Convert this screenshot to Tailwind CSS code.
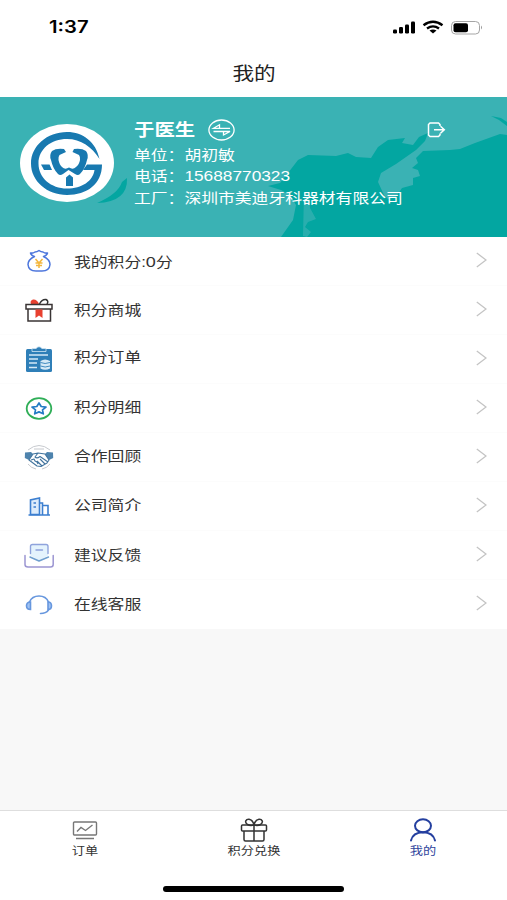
<!DOCTYPE html>
<html lang="zh-CN">
<head>
  <meta charset="UTF-8">
  <meta name="viewport" content="width=device-width, initial-scale=1.0">
  <title>我的</title>
  <script src="https://cdn.jsdelivr.net/npm/@tailwindcss/browser@4"></script>
</head>
<body class="bg-[#f8f8f8] font-['Liberation_Sans','Noto_Sans_CJK_SC',sans-serif]">
<div class="flex flex-col h-[900px] w-[507px] overflow-hidden">

  <!-- status bar -->
  <div class="h-[50px] shrink-0 bg-white flex items-center justify-between pl-[49px] pr-[24px] pt-[5px]">
    <span class="text-[17px] leading-none font-semibold text-black font-[Inter,sans-serif] origin-left scale-x-[1.19]">1:37</span>
    <svg class="w-[91px] h-[16px]" viewBox="0 0 91 16">
      <rect x="1" y="9.5" width="4" height="4" rx="1.2"/>
      <rect x="7" y="7" width="4" height="6.5" rx="1.2"/>
      <rect x="13" y="4.500" width="4" height="9" rx="1.2"/>
      <rect x="19" y="1.500" width="4" height="12" rx="1.2"/>
      <g fill="none" stroke="#000" stroke-width="2.4">
        <path d="M31.500 5.300Q41 -1.700 50.500 5.300"/>
        <path d="M35 8.500Q41 4.300 47 8.500"/>
      </g>
      <path d="M37.500 10.500Q41 8.500 44.500 10.500L41 13.500Z"/>
      <rect x="59.500" y="1.500" width="28" height="12.500" rx="4" fill="none" stroke="#a5a5a5"/>
      <rect x="61.500" y="3.300" width="14.500" height="9" rx="2"/>
      <path d="M89 5.500Q91 7.500 89 9.500Z" fill="#999"/>
    </svg>
  </div>

  <header class="h-[47px] shrink-0 bg-white flex items-center justify-center">
    <h1 class="text-[18px] leading-none text-[#222] scale-x-[1.2] pt-[1px]">我的</h1>
  </header>

  <!-- profile -->
  <section class="relative h-[140px] shrink-0 bg-[#3ab2b4] text-white flex pl-[20px]">
    <svg class="absolute inset-0 w-[507px] h-[140px]" viewBox="0 97 507 140">
      <g fill="#03a6a1">
        <path d="M281 237L293 220L296 205L290 195L281 190L268 186L280 183L288 173L298 160L308 155L336 156L348 153L356 157L371 158L378 147L388 140L405 138L402 143L413 145L419 137L428 133L425 141L416 150L396 164L381 173L378 182L384 195L388 199L396 197L402 188L413 185L413 178L420 176L418 170L412 168L418 163L416 158L423 151L450 150L460 149L475 143L500 134L507 135V237Z"/>
        <path d="M127 178Q128 202 97 203Q118 194 122 182Z"/>
        <path d="M491 116L501 118L507 122V126L499 120Z"/>
      </g>
      <path d="M304 193L309 192L310 208L316 219L308 222L305 227L311 232L307 237L303 236Z" fill="#3ab2b4" opacity=".7"/>
    </svg>
    <svg class="relative mt-[27px] w-[94px] h-[78px]" viewBox="0 0 94 78">
      <ellipse cx="47" cy="39" rx="47" ry="39" fill="#fff"/>
      <g fill="#1879b0">
        <path d="M79.500 35C76 18 63 8 47 8C27 8 11 22 11 39.500S27 71 47 71C67 71 82 60 82 40.500H67L63 46H74.500C73 57 62 64.500 47 64.500C31 64.500 18.500 54 18.500 39.500S31 15 47 15C61 15 72 23 79.500 35Z"/>
        <path d="M21 40.500H29.500L32 46H24Z"/>
        <path d="M44 25Q36 24 32 27Q29 31 31 36Q33 45 38 50Q40 52 43 50L48.500 46L55 50Q58 52 60 50Q65 45 67 36Q69 31 66 27Q62 24 54 25L52.500 28L59 31Q60.500 33 60 36Q59 41 56 43Q53 46 49 43.500Q45 46 42 43Q39.500 41 38.500 36Q38 33 39.500 31L46 28Z"/>
        <path d="M46 53.500L49.500 50.500L53 53.500V62H46Z"/>
      </g>
    </svg>
    <div class="relative ml-[20px] pt-[22px] w-[260px]">
      <div class="flex items-center h-[23px]">
        <h2 class="w-[61px] text-[17px] leading-none font-bold whitespace-nowrap origin-left scale-x-[1.2]">于医生</h2>
        <svg class="ml-[13px] -mt-[1px] w-[27px] h-[22px]" viewBox="0 0 27 22" fill="none" stroke="#fff" stroke-width="1.300">
          <ellipse cx="13.500" cy="11" rx="12.600" ry="10"/>
          <path d="M22 9.300H5.500L11.500 5.800V9M5.500 12.500H22L15.500 16V12.500"/>
        </svg>
      </div>
      <div class="text-[14px] leading-[21.300px] whitespace-nowrap origin-left scale-x-[1.2] pt-[3px]">
        <p>单位：<span>胡初敏</span></p>
        <p>电话：<span class="text-[14.400px]">15688770323</span></p>
        <p>工厂：<span>深圳市美迪牙科器材有限公司</span></p>
      </div>
    </div>
    <svg class="relative ml-[33px] mt-[25px] w-[19px] h-[16px]" viewBox="0 0 19 16" fill="none" stroke="#fff" stroke-width="1.500">
      <path d="M13 4V2.500L11.500 1H3L1.500 2.500V13L3 14.500H11.500L13 13V11.500M7 7.800H17M13.500 4.300L17.300 7.800L13.500 11.300"/>
    </svg>
  </section>

  <!-- menu -->
  <ul class="bg-white shrink-0 text-[14px] leading-none text-[#333]">
    <li class="h-[49px] flex items-center pl-[24px] pr-[20px] border-b border-[#fcfcfc]">
      <svg class="w-[30px] h-[26px]" viewBox="0 0 30 26" fill="none">
        <path d="M10.500 8.500Q7 7.500 6.500 5Q9 5.500 11 4Q13 4 15 2.500Q17 4 19 4Q21 5.500 23.500 5Q23 7.500 19.500 8.500C24.500 11 26 14 26 16.500Q25.500 23 18 23H12Q4.500 23 4 16.500C4 14 5.500 11 10.500 8.500Z" stroke="#4d76dc" stroke-width="1.500" stroke-linejoin="round"/>
        <path d="M11.500 11L15 15L18.500 11M15 15V20M11.500 15H18.500M12 17.500H18" stroke="#f4b63c" stroke-width="1.500"/>
      </svg>
      <span class="ml-[20px] grow origin-left scale-x-[1.2]">我的积分:<span class="text-[15px]">0</span>分</span>
      <svg class="w-[11px] h-[16px] -mt-[3px]" viewBox="0 0 11 16" fill="none" stroke="#c4c4c4" stroke-width="1.300"><path d="M.8 1L10 8L.8 15"/></svg>
    </li>
    <li class="h-[49px] flex items-center pl-[24px] pr-[20px] border-b border-[#fcfcfc]">
      <svg class="w-[30px] h-[26px]" viewBox="0 0 30 26" fill="none">
        <path d="M15 7Q13 2 9 2.500Q5.500 3.500 7 7Z" fill="#e8402f"/>
        <path d="M15.500 7Q18 2 22 2.500Q25 4 23 7" stroke="#333" stroke-width="1.500"/>
        <path d="M2 7.500H28V12H2ZM4 12V24H26.500V12" stroke="#3a3434" stroke-width="1.500"/>
        <path d="M11.500 12.500H18.500V21L15 18.500L11.500 21Z" fill="#e8402f"/>
      </svg>
      <span class="ml-[20px] grow origin-left scale-x-[1.2]">积分商城</span>
      <svg class="w-[11px] h-[16px] -mt-[3px]" viewBox="0 0 11 16" fill="none" stroke="#c4c4c4" stroke-width="1.300"><path d="M.8 1L10 8L.8 15"/></svg>
    </li>
    <li class="h-[49px] flex items-center pl-[24px] pr-[20px] border-b border-[#fcfcfc]">
      <svg class="w-[30px] h-[26px]" viewBox="0 0 30 26" fill="none">
        <rect x="2" y="3" width="26" height="23" rx="1.500" fill="#2f7fb8"/>
        <path d="M8 2.500H12Q15 -1 18 2.500H22V5.500H8Z" fill="#2f7fb8" stroke="#cfe4f2" stroke-width=".8"/>
        <path d="M5 9H24M5 13H14M5 17H13M5 21.500H13" stroke="#d5e9f6" stroke-width="1.300"/>
        <path d="M16.500 15Q21 12 26 15V22.500Q21 25 16.500 22.500Z" fill="#d5e9f6"/>
        <path d="M16.500 16.500Q21 18.500 26 16.500M16.500 20Q21 22 26 20" stroke="#2f7fb8" stroke-width=".9"/>
      </svg>
      <span class="ml-[20px] -mt-1 grow origin-left scale-x-[1.2]">积分订单</span>
      <svg class="w-[11px] h-[16px] -mt-[3px]" viewBox="0 0 11 16" fill="none" stroke="#c4c4c4" stroke-width="1.300"><path d="M.8 1L10 8L.8 15"/></svg>
    </li>
    <li class="h-[49px] flex items-center pl-[24px] pr-[20px] border-b border-[#fcfcfc]">
      <svg class="w-[30px] h-[26px]" viewBox="0 0 30 26" fill="none">
        <ellipse cx="15" cy="13.500" rx="12.300" ry="10.300" stroke="#2fae57" stroke-width="1.800"/>
        <path d="M15 8L17.200 11.500L22 12.100L18.500 14.800L19.300 18.800L15 16.900L10.700 18.800L11.500 14.800L8 12.100L12.800 11.500Z" stroke="#247cc4" stroke-width="1.700" stroke-linejoin="round"/>
      </svg>
      <span class="ml-[20px] -mt-[3px] grow origin-left scale-x-[1.2]">积分明细</span>
      <svg class="w-[11px] h-[16px] -mt-[3px]" viewBox="0 0 11 16" fill="none" stroke="#c4c4c4" stroke-width="1.300"><path d="M.8 1L10 8L.8 15"/></svg>
    </li>
    <li class="h-[49px] flex items-center pl-[24px] pr-[20px] border-b border-[#fcfcfc]">
      <svg class="w-[30px] h-[26px]" viewBox="0 0 30 26" fill="none">
        <path d="M4 6Q15 -3 26 6M4 20Q7 24 12 25M26 20Q23 24 18 25M10 5H20" stroke="#bfc3c8" stroke-width=".9"/>
        <path d="M1 8.500L7 8L9 10L5 16L.8 14ZM29 8.500L23 8L21 10L25 16L29.200 14Z" fill="#4e83ad"/>
        <path d="M9 10L14 9L21 10L25 16L23 19L17 22.500L13 22L5 16ZM14 9L11 13Q13 15 16 12.500L24 18M16 15L21 20M13 17L18 22M7 16L10 15L11 17L13 18L14 20" stroke="#42749e" stroke-width="1.100" stroke-linejoin="round"/>
      </svg>
      <span class="ml-[20px] -mt-[3px] grow origin-left scale-x-[1.2]">合作回顾</span>
      <svg class="w-[11px] h-[16px] -mt-[3px]" viewBox="0 0 11 16" fill="none" stroke="#c4c4c4" stroke-width="1.300"><path d="M.8 1L10 8L.8 15"/></svg>
    </li>
    <li class="h-[49px] flex items-center pl-[24px] pr-[20px] border-b border-[#fcfcfc]">
      <svg class="w-[30px] h-[26px]" viewBox="0 0 30 26" fill="none" stroke="#3c7fd0" stroke-width="1.600">
        <path d="M6.500 21.500V7L15.500 5V21.500Z" fill="#dcebfb"/>
        <path d="M15.500 10H18.500V21.500M18.500 12.500H24V21.500M4.500 22H26M9.500 10H12M9.500 14H12"/>
      </svg>
      <span class="ml-[20px] -mt-[3px] grow origin-left scale-x-[1.2]">公司简介</span>
      <svg class="w-[11px] h-[16px] -mt-[3px]" viewBox="0 0 11 16" fill="none" stroke="#c4c4c4" stroke-width="1.300"><path d="M.8 1L10 8L.8 15"/></svg>
    </li>
    <li class="h-[49px] flex items-center pl-[24px] pr-[20px] border-b border-[#fcfcfc]">
      <svg class="w-[30px] h-[26px]" viewBox="0 0 30 26" fill="none" stroke-linecap="round" stroke-linejoin="round">
        <path d="M6.500 13.500V4.500Q6.500 2.500 8.500 2.500H22Q24 2.500 24 4.500V13.500L15 18.500Z" fill="#e4f3fd"/>
        <path d="M6.500 11.500V4.500Q6.500 2.500 8.500 2.500H22Q24 2.500 24 4.500V11.500M12 8H18.500" stroke="#8fa3dc" stroke-width="1.400"/>
        <path d="M6 15L15 19L24.500 15" stroke="#6f9fcf" stroke-width="1.500"/>
        <path d="M1 13.500V22.500Q1 25 4 25H26.500Q29.200 25 29.200 22.500V13.500" stroke="#9c96d2" stroke-width="1.500"/>
      </svg>
      <span class="ml-[20px] grow origin-left scale-x-[1.2]">建议反馈</span>
      <svg class="w-[11px] h-[16px] -mt-[3px]" viewBox="0 0 11 16" fill="none" stroke="#c4c4c4" stroke-width="1.300"><path d="M.8 1L10 8L.8 15"/></svg>
    </li>
    <li class="h-[49px] flex items-center pl-[24px] pr-[20px]">
      <svg class="w-[30px] h-[26px]" viewBox="0 0 30 26" fill="none" stroke="#6797de" stroke-width="1.600" stroke-linecap="round">
        <path d="M5.500 10Q8 4 15 4T24.500 10M24.500 18Q22 21.500 16.500 21.500"/>
        <path d="M6.500 10V17.500Q2.500 17.500 2.500 13.800T6.500 10ZM24 10V17.500Q27.500 17.500 27.500 13.800T24 10Z" fill="#9fc2f3"/>
      </svg>
      <span class="ml-[20px] -mt-px grow origin-left scale-x-[1.2]">在线客服</span>
      <svg class="w-[11px] h-[16px] -mt-[3px]" viewBox="0 0 11 16" fill="none" stroke="#c4c4c4" stroke-width="1.300"><path d="M.8 1L10 8L.8 15"/></svg>
    </li>
  </ul>

  <!-- tab bar -->
  <nav class="mt-auto h-[90px] shrink-0 bg-white border-t border-[#dedede] flex flex-col items-center">
    <div class="grid grid-cols-3 w-full pt-[7px] h-[75px] text-[11px] leading-none text-[#333]">
      <a class="flex flex-col items-center gap-[4px]" href="#">
        <svg class="w-[26px] h-[24px]" viewBox="0 0 26 24" fill="none" stroke="#777" stroke-width="1.400">
          <rect x="1.500" y="4" width="23" height="13" rx="1"/>
          <path d="M5 13.500L9 9.500L13.500 12.500L20.500 7M4 20.500H22"/>
        </svg>
        <span class="scale-x-[1.2]">订单</span>
      </a>
      <a class="flex flex-col items-center gap-[4px]" href="#">
        <svg class="w-[28px] h-[24px]" viewBox="0 0 28 24" fill="none" stroke="#333" stroke-width="1.500">
          <rect x="1.500" y="7" width="25" height="6" rx="1"/>
          <path d="M4 13V21.500Q4 23 5.500 23H22.500Q24 23 24 21.500V13M14 7V23M14 7Q10 8 7.500 6.500C4 4 6 1 9 1.200Q13 2 14 7Q15 2 19 1.200C22 1 24 4 20.500 6.500Q18 8 14 7"/>
        </svg>
        <span class="scale-x-[1.2]">积分兑换</span>
      </a>
      <a class="flex flex-col items-center gap-[4px] text-[#2f459c]" href="#">
        <svg class="w-[28px] h-[24px]" viewBox="0 0 28 24" fill="none" stroke="#243f9f" stroke-width="2" stroke-linecap="round">
          <ellipse cx="14" cy="7.800" rx="8" ry="6.500"/>
          <path d="M2 22.500Q4 14.500 14 14.300Q24 14.500 26 22.500"/>
        </svg>
        <span class="scale-x-[1.2]">我的</span>
      </a>
    </div>
    <div class="w-[181px] h-[6px] rounded-full bg-black"></div>
  </nav>
</div>
</body>
</html>
